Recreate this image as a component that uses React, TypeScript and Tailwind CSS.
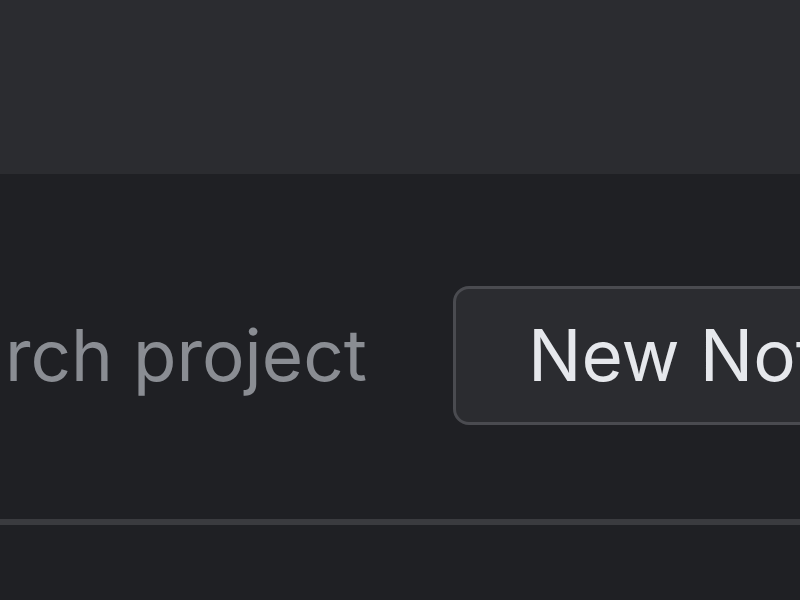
export default function App() {
  return (
    <div className="h-[600px] w-[800px] overflow-hidden bg-[#1f2024] font-['Inter',sans-serif]">
      <div className="h-[174px] bg-[#2b2c30]" />
      <div className="flex h-[345px] items-center pb-[25px] pt-[43px]">
        <div className="flex w-[367px] shrink-0 justify-end whitespace-nowrap text-[71px] leading-none text-[#8a8d93]">
          Search project
        </div>
        <button className="ml-[86px] flex h-[139px] shrink-0 items-center whitespace-nowrap rounded-[16px] border-[3px] border-[#4a4b50] bg-[#2b2c30] pl-[72px] pr-[72px] text-[71px] leading-none text-[#e6e8ec]">
          New Notebook
        </button>
      </div>
      <div className="h-[6px] bg-[#3a3b3f]" />
    </div>
  );
}
